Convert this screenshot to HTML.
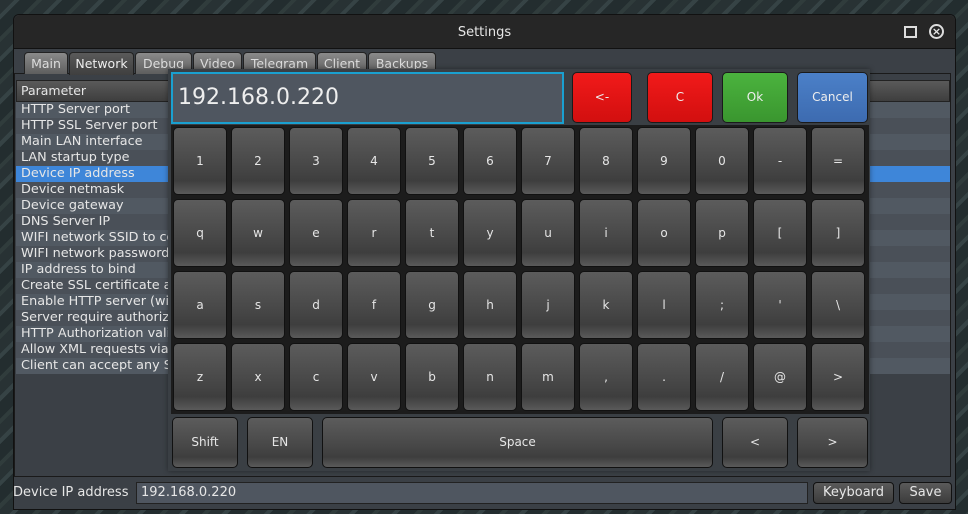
<!DOCTYPE html>
<html><head><meta charset="utf-8"><style>
*{box-sizing:border-box;margin:0;padding:0}
body{width:968px;height:514px;overflow:hidden;position:relative;font-family:"DejaVu Sans","Liberation Sans",sans-serif;font-size:12.5px;color:#e6e6e6;
background:repeating-linear-gradient(135deg,#283234 0 10px,#364345 10px 14px,#232d2f 14px 26px,#303c3c 26px 30px);}
.a{position:absolute}
.win{left:13px;top:14px;width:943px;height:496px;background:#3b4046;border:1px solid #111;border-radius:6px 6px 0 0}
.title{left:14px;top:15px;width:941px;height:34px;background:#262626;border-bottom:1px solid #111;text-align:center;line-height:36px;font-size:13px;border-radius:6px 6px 0 0}
.tab{top:52px;height:22px;background:linear-gradient(#8a8a8a,#5e5e5e);border:1px solid #222;border-bottom:none;border-radius:4px 4px 0 0;color:#ddd;text-align:center;line-height:21px;font-size:12.5px}
.tab.on{background:linear-gradient(#5a5a5a,#3f3f3f);color:#eee}
.panel{left:14px;top:73px;width:937px;height:404px;border:1px solid #1a1a1a;background:#3b4046}
.hdr{left:16px;top:80px;width:934px;height:22px;background:linear-gradient(#5a5a5a,#3e3e3e);border:1px solid #222;padding-left:4px;line-height:20px}
.row{left:16px;width:934px;height:16px;line-height:16px;padding-left:5px;white-space:nowrap;font-size:12.8px}
.kb{left:168px;top:69px;width:702px;height:402px;background:#3a3f44;box-shadow:0 0 5px rgba(0,0,0,.4)}
.disp{left:171px;top:72px;width:393px;height:52px;background:#4f5660;border:2px solid #1aa0d0;font-size:22px;line-height:48px;padding-left:5px;color:#eee}
.btn{border:1px solid #1a1a1a;border-radius:5px;text-align:center;color:#eee;font-size:12px}
.red{background:linear-gradient(#f11a1a,#d20f0f)}
.grn{background:linear-gradient(#4bb33e,#3a962f)}
.blu{background:linear-gradient(#4b80c8,#3d6bb0)}
.grid{left:171px;top:125px;width:698px;height:289px;background:#1c1c1c}
.k{position:absolute;width:54px;height:68px;line-height:66px;border:1px solid #111;border-radius:5px;background:linear-gradient(#5c5c5c,#484848 55%,#3e3e3e 80%,#5a5a5a);text-align:center;font-size:12px;color:#e6e6e6}
.bk{height:51px;line-height:49px}
.sb{border:1px solid #111;border-radius:4px;background:linear-gradient(#5a5a5a,#3c3c3c);text-align:center;line-height:20px;font-size:13px}
</style></head><body>
<div class="a win"></div>
<div class="a title">Settings</div>
<div class="a" style="left:904px;top:26px;width:13px;height:12px;border:2px solid #ddd"></div>
<div class="a" style="left:929px;top:24px;width:15px;height:15px;border:2px solid #ddd;border-radius:50%;text-align:center;line-height:11px;font-size:11px;font-weight:bold">×</div>
<div class="a panel"></div>
<div class="a tab" style="left:24px;width:44px">Main</div>
<div class="a tab on" style="left:69px;width:65px;height:23px">Network</div>
<div class="a tab" style="left:135px;width:57px">Debug</div>
<div class="a tab" style="left:193px;width:49px">Video</div>
<div class="a tab" style="left:243px;width:73px">Telegram</div>
<div class="a tab" style="left:317px;width:50px">Client</div>
<div class="a tab" style="left:368px;width:68px">Backups</div>
<div class="a hdr">Parameter</div>
<div class="a row" style="top:102px;background:#515962">HTTP Server port</div>
<div class="a row" style="top:118px;background:#4a5058">HTTP SSL Server port</div>
<div class="a row" style="top:134px;background:#515962">Main LAN interface</div>
<div class="a row" style="top:150px;background:#4a5058">LAN startup type</div>
<div class="a row" style="top:166px;background:#3e86d9">Device IP address</div>
<div class="a row" style="top:182px;background:#4a5058">Device netmask</div>
<div class="a row" style="top:198px;background:#515962">Device gateway</div>
<div class="a row" style="top:214px;background:#4a5058">DNS Server IP</div>
<div class="a row" style="top:230px;background:#515962">WIFI network SSID to connect</div>
<div class="a row" style="top:246px;background:#4a5058">WIFI network password</div>
<div class="a row" style="top:262px;background:#515962">IP address to bind</div>
<div class="a row" style="top:278px;background:#4a5058">Create SSL certificate auto</div>
<div class="a row" style="top:294px;background:#515962">Enable HTTP server (with</div>
<div class="a row" style="top:310px;background:#4a5058">Server require authorization</div>
<div class="a row" style="top:326px;background:#515962">HTTP Authorization valid</div>
<div class="a row" style="top:342px;background:#4a5058">Allow XML requests via HTTP</div>
<div class="a row" style="top:358px;background:#515962">Client can accept any SSL</div>

<div class="a kb"></div>
<div class="a disp">192.168.0.220</div>
<div class="a btn red" style="left:572px;top:72px;width:60px;height:51px;line-height:49px">&lt;-</div>
<div class="a btn red" style="left:647px;top:72px;width:66px;height:51px;line-height:49px">C</div>
<div class="a btn grn" style="left:722px;top:72px;width:66px;height:51px;line-height:49px">Ok</div>
<div class="a btn blu" style="left:797px;top:72px;width:71px;height:51px;line-height:49px">Cancel</div>
<div class="a grid">
<div class="k" style="left:2px;top:2px">1</div><div class="k" style="left:60px;top:2px">2</div><div class="k" style="left:118px;top:2px">3</div><div class="k" style="left:176px;top:2px">4</div><div class="k" style="left:234px;top:2px">5</div><div class="k" style="left:292px;top:2px">6</div><div class="k" style="left:350px;top:2px">7</div><div class="k" style="left:408px;top:2px">8</div><div class="k" style="left:466px;top:2px">9</div><div class="k" style="left:524px;top:2px">0</div><div class="k" style="left:582px;top:2px">-</div><div class="k" style="left:640px;top:2px">=</div>
<div class="k" style="left:2px;top:74px">q</div><div class="k" style="left:60px;top:74px">w</div><div class="k" style="left:118px;top:74px">e</div><div class="k" style="left:176px;top:74px">r</div><div class="k" style="left:234px;top:74px">t</div><div class="k" style="left:292px;top:74px">y</div><div class="k" style="left:350px;top:74px">u</div><div class="k" style="left:408px;top:74px">i</div><div class="k" style="left:466px;top:74px">o</div><div class="k" style="left:524px;top:74px">p</div><div class="k" style="left:582px;top:74px">[</div><div class="k" style="left:640px;top:74px">]</div>
<div class="k" style="left:2px;top:146px">a</div><div class="k" style="left:60px;top:146px">s</div><div class="k" style="left:118px;top:146px">d</div><div class="k" style="left:176px;top:146px">f</div><div class="k" style="left:234px;top:146px">g</div><div class="k" style="left:292px;top:146px">h</div><div class="k" style="left:350px;top:146px">j</div><div class="k" style="left:408px;top:146px">k</div><div class="k" style="left:466px;top:146px">l</div><div class="k" style="left:524px;top:146px">;</div><div class="k" style="left:582px;top:146px">'</div><div class="k" style="left:640px;top:146px">\</div>
<div class="k" style="left:2px;top:218px">z</div><div class="k" style="left:60px;top:218px">x</div><div class="k" style="left:118px;top:218px">c</div><div class="k" style="left:176px;top:218px">v</div><div class="k" style="left:234px;top:218px">b</div><div class="k" style="left:292px;top:218px">n</div><div class="k" style="left:350px;top:218px">m</div><div class="k" style="left:408px;top:218px">,</div><div class="k" style="left:466px;top:218px">.</div><div class="k" style="left:524px;top:218px">/</div><div class="k" style="left:582px;top:218px">@</div><div class="k" style="left:640px;top:218px">&gt;</div>
</div>
<div class="k bk" style="left:172px;top:417px;width:66px">Shift</div>
<div class="k bk" style="left:247px;top:417px;width:66px">EN</div>
<div class="k bk" style="left:322px;top:417px;width:391px">Space</div>
<div class="k bk" style="left:722px;top:417px;width:66px">&lt;</div>
<div class="k bk" style="left:797px;top:417px;width:71px">&gt;</div>

<div class="a" style="left:13px;top:484px;line-height:18px;font-size:13px">Device IP address</div>
<div class="a" style="left:136px;top:482px;width:672px;height:22px;background:#4f5660;border:1px solid #222;padding-left:4px;line-height:20px;font-size:13px">192.168.0.220</div>
<div class="a sb" style="left:813px;top:482px;width:81px;height:22px">Keyboard</div>
<div class="a sb" style="left:899px;top:482px;width:53px;height:22px">Save</div>
</body></html>
